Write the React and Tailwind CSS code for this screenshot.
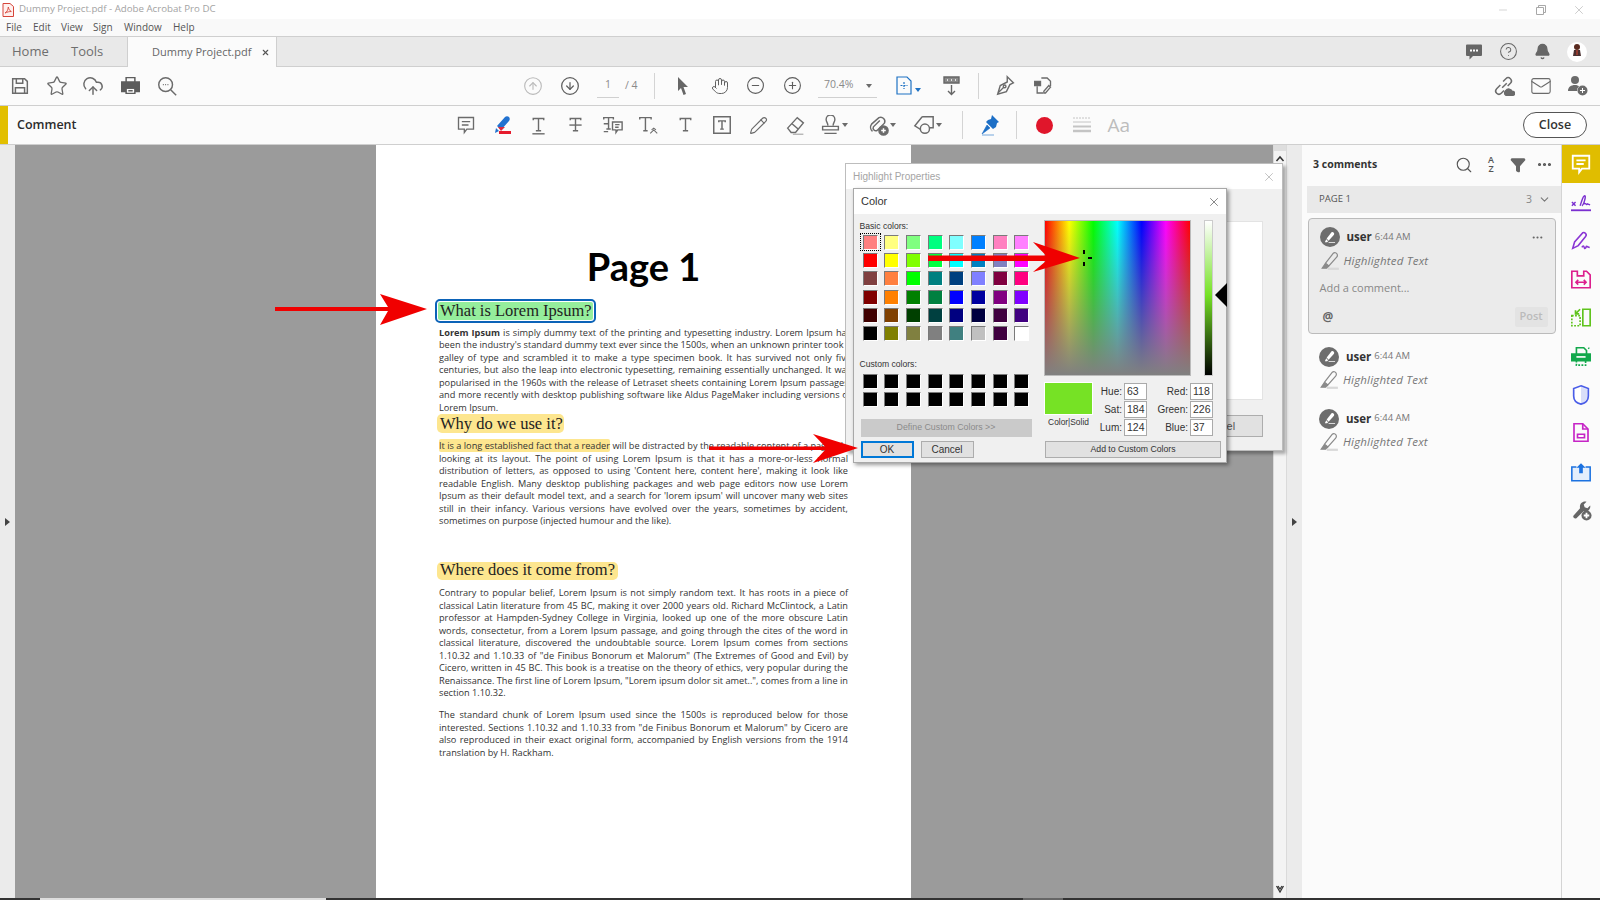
import { Star, CloudUpload, CircleArrowUp, CircleArrowDown, Hand, CircleMinus, CirclePlus, Pencil, Search, Filter, MoreHorizontal, ChevronDown, HelpCircle, Bell, Mail, X, Minus } from 'lucide-react';

const UI = 'font-["Open_Sans",sans-serif]';
const WIN = 'font-["Liberation_Sans",sans-serif]';

const BASIC = [
  '#ff8080', '#ffff80', '#80ff80', '#00ff80', '#80ffff', '#0080ff', '#ff80c0', '#ff80ff',
  '#ff0000', '#ffff00', '#80ff00', '#00ff40', '#00ffff', '#0080c0', '#8080c0', '#ff00ff',
  '#804040', '#ff8040', '#00ff00', '#008080', '#004080', '#8080ff', '#800040', '#ff0080',
  '#800000', '#ff8000', '#008000', '#008040', '#0000ff', '#0000a0', '#800080', '#8000ff',
  '#400000', '#804000', '#004000', '#004040', '#000080', '#000040', '#400040', '#400080',
  '#000000', '#808000', '#808040', '#808080', '#408080', '#c0c0c0', '#400040', '#ffffff',
];

const P1 = [
  'been the industry\'s standard dummy text ever since the 1500s, when an unknown printer took a',
  'galley of type and scrambled it to make a type specimen book. It has survived not only five',
  'centuries, but also the leap into electronic typesetting, remaining essentially unchanged. It was',
  'popularised in the 1960s with the release of Letraset sheets containing Lorem Ipsum passages,',
  'and more recently with desktop publishing software like Aldus PageMaker including versions of',
];
const P2 = [
  'looking at its layout. The point of using Lorem Ipsum is that it has a more-or-less normal',
  'distribution of letters, as opposed to using \'Content here, content here\', making it look like',
  'readable English. Many desktop publishing packages and web page editors now use Lorem',
  'Ipsum as their default model text, and a search for \'lorem ipsum\' will uncover many web sites',
  'still in their infancy. Various versions have evolved over the years, sometimes by accident,',
];
const P3 = [
  'Contrary to popular belief, Lorem Ipsum is not simply random text. It has roots in a piece of',
  'classical Latin literature from 45 BC, making it over 2000 years old. Richard McClintock, a Latin',
  'professor at Hampden-Sydney College in Virginia, looked up one of the more obscure Latin',
  'words, consectetur, from a Lorem Ipsum passage, and going through the cites of the word in',
  'classical literature, discovered the undoubtable source. Lorem Ipsum comes from sections',
  '1.10.32 and 1.10.33 of "de Finibus Bonorum et Malorum" (The Extremes of Good and Evil) by',
  'Cicero, written in 45 BC. This book is a treatise on the theory of ethics, very popular during the',
  'Renaissance. The first line of Lorem Ipsum, "Lorem ipsum dolor sit amet..", comes from a line in',
];
const P4 = [
  'The standard chunk of Lorem Ipsum used since the 1500s is reproduced below for those',
  'interested. Sections 1.10.32 and 1.10.33 from "de Finibus Bonorum et Malorum" by Cicero are',
  'also reproduced in their exact original form, accompanied by English versions from the 1914',
];

const Svg = ({ size = 22, children, className = 'text-[#6b6b6b]' }) => (
  <svg width={size} height={size} viewBox="0 0 24 24" fill="none" stroke="currentColor" strokeWidth="1.6" className={className}>
    {children}
  </svg>
);

const Slot = ({ w = 'w-[36.6px]', children }) => (
  <div className={`${w} h-full shrink-0 flex items-center justify-center`}>{children}</div>
);

const Caret = ({ color = 'border-t-[#6b6b6b]' }) => (
  <span className={`inline-block ml-[1px] w-0 h-0 border-x-[3px] border-x-transparent border-t-[4px] ${color}`} />
);

const Sep = ({ h = 'h-[26px]' }) => <div className={`w-px ${h} bg-[#d4d4d4] shrink-0`} />;

const Serif = ({ children }) => (
  <>
    <path d="M6 6V4h12v2M12 4v14M9 18h6" />
    {children}
  </>
);

const Line = ({ children, last, wide }) => (
  <div className={last ? 'whitespace-nowrap' : `[text-align:justify] [text-align-last:justify] ${wide ? 'w-[412px]' : ''}`}>{children}</div>
);

const Swatch = ({ color, selected }) => (
  <div className={`h-[18.33px] flex items-center justify-center ${selected ? 'outline outline-1 outline-dotted outline-black -outline-offset-1 h-[18px]' : ''}`}>
    <div
      className="w-[15px] h-[15px] border border-t-[#7a7a7a] border-l-[#7a7a7a] border-r-white border-b-white"
      style={{ backgroundColor: color }}
    />
  </div>
);

const Field = ({ label, value }) => (
  <div className="flex items-center h-[18.4px] justify-end">
    <span className="text-[10px] text-[#333] mr-[2px] whitespace-nowrap">{label}:</span>
    <div className="w-[23px] h-[17px] bg-white border border-[#aaa] text-[10.5px] text-[#333] pl-[2px] leading-[15px]">{value}</div>
  </div>
);

const MarkerIcon = ({ size = 20 }) => (
  <svg width={size} height={size} viewBox="0 0 18 18" fill="none" stroke="#8a8a8a" strokeWidth="1.1">
    <path d="M5 11l7-9c1-1 3-.5 3.5 1s.5 1.5-.5 2.5L8 13.5z" />
    <path d="M5 11l-3 4.500h4l2-2" fill="#8a8a8a" />
    <path d="M7 16h10" stroke="#d8d8d8" strokeWidth="2" />
  </svg>
);

const Avatar = () => (
  <div className="w-5 h-5 rounded-full bg-[#6d6d6d] flex items-center justify-center shrink-0">
    <svg width="13" height="13" viewBox="0 0 14 14" fill="white">
      <path d="M4 8l5-6.5c.8-.7 2-.4 2.600.3.6.8.6 1.600 0 2.400L6 10.500z" />
      <path d="M3.500 9L2 12h2.500l1-1zM6 12h7v1H6z" />
    </svg>
  </div>
);

const CommentHead = ({ menu }) => (
  <div className="flex items-center h-5">
    <Avatar />
    <span className="ml-[7px] text-[11.5px] font-bold text-[#333]">user</span>
    <span className="ml-[3px] text-[9.5px] text-[#777]">6:44 AM</span>
    {menu && <MoreHorizontal size={13} className="ml-auto mr-[4px] text-[#666]" />}
  </div>
);

const Highlighted = () => (
  <div className="flex items-center h-5 gap-[4px] mt-[3.5px]">
    <MarkerIcon />
    <span className="text-[11.5px] italic text-[#777] tracking-[0.2px]">Highlighted Text</span>
  </div>
);

const rail = 'h-[38.4px] flex items-center justify-center';

export default function App() {
  return (
    <div className={`relative w-[1600px] h-[900px] overflow-hidden bg-white flex flex-col ${UI}`}>
      {/* title bar */}
      <div className="h-[19px] shrink-0 bg-white flex items-center pl-[2px]">
        <svg width="12" height="14" viewBox="0 0 12 14" fill="none">
          <path d="M1 .5h7l3.500 3v10H1z" fill="#fff0ee" stroke="#d6453a" />
          <path d="M3 10c2-1 3-3 3.300-6 .5 2.500 1.500 3.700 3 4.500-2 0-4 .5-6.300 1.500z" stroke="#d6453a" strokeWidth=".9" />
        </svg>
        <span className="ml-[5px] text-[9.7px] text-[#a3a3a3]">Dummy Project.pdf - Adobe Acrobat Pro DC</span>
        <div className="ml-auto flex items-center text-[#a8a8a8]">
          <Minus size={12} strokeWidth={1} className="mr-[27px]" />
          <svg width="10" height="10" viewBox="0 0 10 10" fill="none" stroke="currentColor" className="mr-[26px]">
            <path d="M.5 2.500h7v7h-7zM2.500 2.500v-2h7v7h-2" />
          </svg>
          <X size={14} strokeWidth={1} className="mr-[14px]" />
        </div>
      </div>

      {/* menu */}
      <div className="h-[17px] shrink-0 bg-[#f9f9f9] flex items-center text-[10px] text-[#555] pl-[6px]">
        <span className="w-[27px]">File</span>
        <span className="w-[28px]">Edit</span>
        <span className="w-[32px]">View</span>
        <span className="w-[31px]">Sign</span>
        <span className="w-[49px]">Window</span>
        <span>Help</span>
      </div>

      {/* tabs */}
      <div className="h-[31px] shrink-0 bg-[#e9e9e9] border-y border-[#cfcfcf] flex items-stretch">
        <div className="w-[127px] flex items-center text-[13px] text-[#6e6e6e] pl-[12px]">
          <span className="w-[59px]">Home</span>
          <span>Tools</span>
        </div>
        <div className="w-[150px] bg-[#fbfbfb] border-x border-[#cfcfcf] -mb-px flex items-center pl-[24px] text-[11px] text-[#666] whitespace-nowrap">
          <span>Dummy Project.pdf</span>
          <X size={9} strokeWidth={3} className="ml-[10px] text-[#555]" />
        </div>
        <div className="ml-auto flex items-center h-full">
          <Slot w="w-[35px]">
            <svg width="18" height="18" viewBox="0 0 18 18" fill="#666">
              <path d="M2 1.500h14a1 1 0 0 1 1 1V12a1 1 0 0 1-1 1H8l-3.500 3.500V13H2a1 1 0 0 1-1-1V2.500a1 1 0 0 1 1-1z" />
              <path d="M5 6.500h2v2H5zM8 6.500h2v2H8zM11 6.500h2v2h-2z" fill="white" />
            </svg>
          </Slot>
          <Slot w="w-[35px]"><HelpCircle size={19} strokeWidth={1.3} className="text-[#666]" /></Slot>
          <Slot w="w-[33px]"><Bell size={17} fill="#666" className="text-[#666]" /></Slot>
          <div className="w-[20px] h-[20px] rounded-full bg-white ml-[8px] mr-[13px] flex items-center justify-center overflow-hidden">
            <svg width="14" height="17" viewBox="0 0 14 17">
              <circle cx="7" cy="4" r="3" fill="#5a2b20" />
              <path d="M4 7h6l1 6H3z" fill="#4a3030" />
              <path d="M6.500 7h1v5h-1z" fill="#d8442f" />
            </svg>
          </div>
        </div>
      </div>

      {/* toolbar */}
      <div className="h-[39px] shrink-0 bg-[#fbfbfb] border-b border-[#cfcfcf] flex items-center pb-px">
        <div className="flex items-center h-full pl-[2px]">
          <Slot>
            <Svg>
              <path d="M4 4h13l3 3v13H4zM8 4v5h7V4M7 20v-6h10v6" />
            </Svg>
          </Slot>
          <Slot><Star size={22} strokeWidth={1.4} className="text-[#6b6b6b]" /></Slot>
          <Slot><CloudUpload size={22} strokeWidth={1.6} className="text-[#6b6b6b]" /></Slot>
          <Slot>
            <svg width="21" height="21" viewBox="0 0 24 24" fill="none" stroke="#5d5d5d" strokeWidth="1.700">
              <path d="M7 8V3h10v5" />
              <path d="M2 8h20v11h-4v-4H6v4H2z" fill="#5d5d5d" />
              <path d="M7 15h10v6H7zM9.500 18h5" />
            </svg>
          </Slot>
          <Slot>
            <Svg>
              <circle cx="10.500" cy="10.500" r="7.500" />
              <path d="M16 16l6 6M7.500 10.500h1M10 10.500h1M12.500 10.500h1" />
            </Svg>
          </Slot>
        </div>
        <div className="flex items-center h-full ml-[330px]">
          <Slot w="w-[37px]"><CircleArrowUp size={20} strokeWidth={1.3} className="text-[#b9b9b9]" /></Slot>
          <Slot w="w-[36px]"><CircleArrowDown size={20} strokeWidth={1.5} className="text-[#5d5d5d]" /></Slot>
          <div className="ml-[9px] w-[22px] h-[24px] border-b border-[#d0d0d0] flex items-center justify-center text-[10.5px] text-[#8a8a8a]">1</div>
          <span className="ml-[6px] text-[10.5px] text-[#8a8a8a] w-[22px]">/ 4</span>
          <div className="ml-[7px]"><Sep /></div>
          <Slot w="w-[56px]">
            <svg width="14" height="20" viewBox="0 0 14 20" fill="#666"><path d="M2 1l10 10H7.500l2.500 7-2.500 1-2.500-7-3 3z" /></svg>
          </Slot>
          <Slot w="w-[18px]"><Hand size={22} strokeWidth={1.3} className="text-[#5d5d5d]" /></Slot>
          <Slot w="w-[54px]"><CircleMinus size={19} strokeWidth={1.4} className="text-[#5d5d5d]" /></Slot>
          <Slot w="w-[19px]"><CirclePlus size={19} strokeWidth={1.4} className="text-[#5d5d5d]" /></Slot>
          <div className="ml-[16px] w-[59px] h-[24px] border-b border-[#d0d0d0] flex items-center justify-between text-[10.5px] text-[#8a8a8a]">
            <span className="ml-[6px]">70.4%</span>
            <span className="mr-[5px]"><Caret /></span>
          </div>
          <div className="ml-[19px] w-[28px] flex items-center">
            <svg width="16" height="19" viewBox="0 0 16 19" fill="none" stroke="#1f72c4" strokeWidth="1.200">
              <path d="M1 1h10l4 4v13H1z" />
              <path d="M8 6v7M4.500 9.500h7" strokeDasharray="2 1" />
            </svg>
            <span className="ml-[2px]"><Caret color="border-t-[#1f72c4]" /></span>
          </div>
          <div className="ml-[5px]">
            <Slot w="w-[45px]">
              <svg width="17" height="20" viewBox="0 0 17 20" fill="none" stroke="#666" strokeWidth="1.400">
                <path d="M1 1h15v6H1z" fill="#888" />
                <path d="M4 4h1M8 4h1M12 4h1" stroke="white" />
                <path d="M8.500 9v9M5 15l3.500 3.500L12 15" />
              </svg>
            </Slot>
          </div>
          <div className="ml-[4px]"><Sep /></div>
          <Slot w="w-[54px]">
            <Svg size={21}><path d="M14 2l7 7-4 2-4 8-10 3 3-10 8-4zM3 21l7-7" /><circle cx="11" cy="13" r="1.500" /></Svg>
          </Slot>
          <Slot w="w-[20px]">
            <Svg size={21}><path d="M10 3h7l4 4v6M5 13v8h7" /><path d="M2 7h7v5H2z" fill="#666" /><path d="M21 14l-6 7h-2v-2l6-7z" /></Svg>
          </Slot>
        </div>
        <div className="ml-auto flex items-center h-full pr-[5px]">
          <Slot w="w-[37px]">
            <Svg size={22}><path d="M10 14l5-5M8 11l-4 4a3 3 0 0 0 5 5l3-3M16 12l3-3a3.500 3.500 0 0 0-5-5l-3 3" /><path d="M14 22a3 3 0 0 1 0-5 4 4 0 0 1 7 1 2 2 0 0 1 1 4z" fill="#6b6b6b" /></Svg>
          </Slot>
          <Slot w="w-[37px]"><Mail size={22} strokeWidth={1.2} className="text-[#6b6b6b]" /></Slot>
          <Slot w="w-[36px]">
            <svg width="21" height="21" viewBox="0 0 21 21" fill="#6b6b6b">
              <circle cx="8" cy="5" r="4" />
              <path d="M1 16c0-4 3-6 7-6 2 0 3 .5 4 1.500A5 5 0 0 0 10 16z" />
              <circle cx="15.500" cy="15.500" r="5" />
              <path d="M15 13h1v2h2v1h-2v2h-1v-2h-2v-1h2z" fill="white" />
            </svg>
          </Slot>
        </div>
      </div>

      {/* comment bar */}
      <div className="h-[39px] shrink-0 bg-[#fbfbfb] border-b border-[#cfcfcf] flex items-center">
        <div className="w-2 h-full bg-[#e2bf00] shrink-0" />
        <span className="ml-[9px] text-[12.5px] font-semibold text-[#2c2c2c]">Comment</span>
        <div className="flex items-center h-full ml-[371px]">
          <Slot>
            <Svg size={20}><path d="M3 3h18v14h-8l-3 4v-4H3z" /><path d="M7 8h10M7 12h8" /></Svg>
          </Slot>
          <Slot>
            <svg width="20" height="20" viewBox="0 0 20 20">
              <path d="M5 11l8-9c1-1 3-1 4 0s1 3 0 4l-8 9z" fill="#2272d0" />
              <path d="M6 12l7 0-4 4z" fill="#dc2a3c" />
              <path d="M4 13l3 3-4 2z" fill="#2272d0" />
              <path d="M7 16h12v3H7z" fill="#e61b2d" />
            </svg>
          </Slot>
          <Slot><Svg size={21}><Serif /><path d="M5 21.500h14" /></Svg></Slot>
          <Slot><Svg size={21}><Serif /><path d="M5 11.500h14" /></Svg></Slot>
          <Slot>
            <Svg size={21}><path d="M2 5V3h11v2M7.500 3v13M5 16h5M2 19h5M2 10h5" /><path d="M12 8h11v9h-5l-2 3v-3h-4z" fill="#fbfbfb" /><path d="M15 11h5M15 14h4" /></Svg>
          </Slot>
          <Slot><Svg size={21}><path d="M2 5V3h13v2M8.500 3v15M6 18h5" /><path d="M14 21l4-4 4 4M15.500 17l2.500-2 2.500 2" strokeWidth="1.200" /></Svg></Slot>
          <Slot><Svg size={21}><Serif /></Svg></Slot>
          <Slot><Svg size={22}><path d="M3 3h18v18H3z" /><path d="M8.500 9V7.500h7V9M12 7.500v9M10 16.500h4" /></Svg></Slot>
          <Slot><Pencil size={19} strokeWidth={1.4} className="text-[#6b6b6b]" /></Slot>
          <Slot><Svg size={21}><path d="M3 15L14 3l7 6-9 11H7z" /><path d="M8 10l7 6" /><path d="M9 22h12" stroke="#b5b5b5" /></Svg></Slot>
          <Slot w="w-[42px]">
            <Svg size={21}><path d="M9 12c0-3-2-4-2-7a5 5 0 0 1 10 0c0 3-2 4-2 7M3 13h18v4H3zM5 21h14" /></Svg>
            <Caret />
          </Slot>
          <Slot w="w-[52px]">
            <Svg size={22}><path d="M14 7l-7 7a3 3 0 0 0 4 4l8-8a4.500 4.500 0 0 0-6-6L5 11a6 6 0 0 0 1 8" /><circle cx="18" cy="18" r="5" fill="#6b6b6b" /><path d="M18 15.500v5M15.500 18h5" stroke="white" /></Svg>
            <Caret />
          </Slot>
          <Slot w="w-[40px]">
            <Svg size={22}><path d="M10 3L2 13l8 5M10 3l12 0v12h-6" /><circle cx="13" cy="16" r="5" fill="#fbfbfb" /></Svg>
            <Caret />
          </Slot>
          <div className="ml-[15px]"><Sep h="h-[28px]" /></div>
          <Slot w="w-[53px]">
            <svg width="20" height="22" viewBox="0 0 20 22" fill="#1d6fc6">
              <path d="M12 1l7 7-2 1-1 4-3 2-7-7 2-2 3-1z" />
              <path d="M7 11l3 3-8 6zM2 21h12" stroke="#1d6fc6" strokeWidth=".6" />
            </svg>
          </Slot>
          <Sep h="h-[28px]" />
          <Slot w="w-[54px]"><div className="w-[17px] h-[17px] rounded-full bg-[#e0162b]" /></Slot>
          <Slot w="w-[21px]">
            <svg width="18" height="16" viewBox="0 0 18 16" fill="none" stroke="#c4c4c4"><path d="M0 1h18" strokeDasharray="2 1" /><path d="M0 5h18" /><path d="M0 9.500h18" strokeWidth="2" /><path d="M0 14h18" strokeWidth="2.500" /></svg>
          </Slot>
          <span className="ml-[15px] text-[19px] text-[#bdbdbd]">Aa</span>
        </div>
        <button className="ml-auto mr-[13px] w-[64px] h-[26px] rounded-full border border-[#555] bg-white text-[12.5px] font-semibold text-[#333]">Close</button>
      </div>

      {/* body */}
      <div className="flex-1 min-h-0 flex">
        <div className="w-[15px] bg-[#ebebeb] flex items-center justify-center">
          <span className="w-0 h-0 border-y-[4px] border-y-transparent border-l-[5px] border-l-[#444]" />
        </div>
        <div className="w-[361px] bg-[#9b9b9b]" />

        {/* pdf page */}
        <div className="w-[535px] bg-white pl-[63px] pr-[63px] text-[9.2px] leading-[12.5px] text-[#333] overflow-hidden">
          <div className='mt-[101px] h-[40px] flex items-center justify-center font-["Lato",sans-serif] font-bold text-[38px] text-black'>Page 1</div>
          <div className='mt-[16px] w-[155px] -ml-[1px] h-[18px] bg-[#95ee9c] outline-2 outline-offset-1 outline-[#0c63b8] rounded-[2px] flex items-center pl-[2px] font-["Liberation_Serif",serif] text-[16.5px] text-[#222] whitespace-nowrap'>What is Lorem Ipsum?</div>
          <div className="mt-[6.75px]">
            <Line wide><b>Lorem Ipsum</b> is simply dummy text of the printing and typesetting industry. Lorem Ipsum has</Line>
            {P1.map((l) => <Line key={l} wide>{l}</Line>)}
            <Line last>Lorem Ipsum.</Line>
          </div>
          <div className='w-[127px] -ml-[2px] h-[19px] bg-[#fde68f] rounded-[5px] flex items-center pl-[3px] font-["Liberation_Serif",serif] text-[16.5px] text-[#222] whitespace-nowrap'>Why do we use it?</div>
          <div className="mt-[6.75px]">
            <Line last><span className="bg-[#fde68f] rounded-[2px]">It is a long established fact that a reader</span> will be distracted by the readable content of a page when</Line>
            {P2.map((l) => <Line key={l}>{l}</Line>)}
            <Line last>sometimes on purpose (injected humour and the like).</Line>
          </div>
          <div className='mt-[34px] w-[181px] -ml-[2px] h-[18px] bg-[#fde68f] rounded-[5px] flex items-center pl-[3px] font-["Liberation_Serif",serif] text-[16.5px] text-[#222] whitespace-nowrap'>Where does it come from?</div>
          <div className="mt-[7.75px]">
            {P3.map((l) => <Line key={l}>{l}</Line>)}
            <Line last>section 1.10.32.</Line>
          </div>
          <div className="mt-[9.5px]">
            {P4.map((l) => <Line key={l}>{l}</Line>)}
            <Line last>translation by H. Rackham.</Line>
          </div>
        </div>

        <div className="w-[362px] bg-[#9b9b9b]" />

        {/* scrollbar */}
        <div className="w-[14px] bg-[#f3f3f3] flex flex-col items-center justify-between border-x border-[#dadada] pb-[4px]">
          <div className="w-full">
            <div className="h-[6px] bg-[#dedede]" />
            <svg width="12" height="12" viewBox="0 0 12 12" fill="none" stroke="#333" strokeWidth="1.500" className="mt-[2px]"><path d="M2.500 8L6 4l3.500 4" /></svg>
          </div>
          <svg width="10" height="10" viewBox="0 0 10 10" fill="none" stroke="#333" strokeWidth="1.200"><path d="M1.500 2L5 8l3.500-6M3 2l2 3 2-3" /></svg>
        </div>
        <div className="w-[15px] bg-[#ebebeb] flex items-center justify-center">
          <span className="w-0 h-0 border-y-[4px] border-y-transparent border-l-[5px] border-l-[#444]" />
        </div>

        {/* comments panel */}
        <div className="w-[259px] bg-[#fbfbfb] flex flex-col">
          <div className="h-[41px] flex items-center pl-[11px] pb-[2px]">
            <span className="text-[10.5px] font-bold text-[#333]">3 comments</span>
            <div className="ml-auto flex items-center mr-[8px]">
              <Search size={18} strokeWidth={1.5} className="text-[#555] mr-[15px]" />
              <div className="flex flex-col items-center text-[9px] font-semibold leading-[8.5px] text-[#555] mr-[16px]"><span>A</span><span>Z</span></div>
              <Filter size={16} fill="#666" className="text-[#666] mr-[10px]" />
              <MoreHorizontal size={17} strokeWidth={2.5} className="text-[#555]" />
            </div>
          </div>
          <div className="h-[27px] ml-[5px] bg-[#e9e9e9] flex items-center pl-[12px] text-[9.5px] text-[#555]">
            <span>PAGE 1</span>
            <span className="ml-auto text-[10.5px] text-[#888]">3</span>
            <ChevronDown size={13} className="ml-[6px] mr-[10px] text-[#777]" />
          </div>
          <div className="mt-[5px] ml-[5.5px] mr-[5.5px] h-[116px] bg-[#ebebeb] border border-[#bbb] rounded-[4px] pl-[11px] pr-[7px] pt-[8px]">
            <CommentHead menu />
            <Highlighted />
            <div className="mt-[9.5px] text-[11px] text-[#888]">Add a comment...</div>
            <div className="mt-[10px] flex items-center justify-between">
              <span className="text-[12px] font-bold text-[#666] ml-[3px]">@</span>
              <div className="w-[33px] h-[20px] rounded-[2px] bg-[#e3e3e3] flex items-center justify-center text-[11px] font-semibold text-[#bbb]">Post</div>
            </div>
          </div>
          <div className="ml-[17px] mt-[12.5px]">
            <CommentHead />
            <Highlighted />
          </div>
          <div className="ml-[17px] mt-[18.5px]">
            <CommentHead />
            <Highlighted />
          </div>
        </div>

        {/* tool rail */}
        <div className="w-[39px] bg-[#fbfbfb] border-l border-[#d4d4d4]">
          <div className={`${rail} bg-[#e0bd00]`}>
            <svg width="22" height="22" viewBox="0 0 24 24" fill="none" stroke="white" strokeWidth="2"><path d="M3 3h18v14h-8l-3 4v-4H3z" /><path d="M7 8h10M7 12h8" /></svg>
          </div>
          <div className={rail}>
            <svg width="22" height="20" viewBox="0 0 24 22" fill="none" stroke="#7b2fd0" strokeWidth="1.600"><path d="M2 10l4 4M6 10l-4 4M11 14c2-5 3-11 5-11s-1 10-3 11M15 12c2-2 3 2 4 0l3 1" /><path d="M1 19h22" strokeWidth="2" /></svg>
          </div>
          <div className={rail}>
            <svg width="22" height="22" viewBox="0 0 24 24" fill="none" stroke="#8a35d4" strokeWidth="1.700"><path d="M3 20l2-7 9-10c2-1 5 2 3 4L9 17z" /><path d="M13 19c1-2 2-2 2.500 0s1.500 1 2-.5 1.500 0 4 .5" /></svg>
          </div>
          <div className={rail}>
            <svg width="22" height="21" viewBox="0 0 24 22" fill="none" stroke="#dc1f8e" strokeWidth="1.800"><path d="M2 2h6v5h7V2h3l4 4v14H2z" /><path d="M7 14h10M9 11.500L6.500 14 9 16.500M15 11.500l2.500 2.500-2.500 2.500" /></svg>
          </div>
          <div className={rail}>
            <svg width="22" height="21" viewBox="0 0 24 22" fill="none" stroke="#5fc31c" strokeWidth="1.800"><path d="M14 2h8v18h-8z" /><path d="M2 9h9v11H2z" strokeDasharray="2 1.500" /><path d="M11 2L6 7M6 3v4h4" /></svg>
          </div>
          <div className={rail}>
            <svg width="22" height="22" viewBox="0 0 24 24" fill="none" stroke="#12a84b" strokeWidth="1.800"><path d="M7 10V3h8l3 3v4M20 3l1 1" /><path d="M2 10h20v7H2z" fill="#12a84b" /><path d="M7 17v5h10v-5" strokeDasharray="2 1.500" /><path d="M7 13h10" stroke="white" /></svg>
          </div>
          <div className={rail}>
            <svg width="20" height="22" viewBox="0 0 20 24" fill="none" stroke="#4a5de8" strokeWidth="1.800"><path d="M10 3v18c-3-1-7-3-7-8V6z" fill="#fff" stroke="none" /><path d="M10 3v18c3-1 7-3 7-8V6z" fill="#d9def9" stroke="none" /><path d="M10 2l8 3v8c0 5-4 8-8 9-4-1-8-4-8-9V5z" /></svg>
          </div>
          <div className={rail}>
            <svg width="18" height="21" viewBox="0 0 20 24" fill="none" stroke="#c625c6" strokeWidth="1.900"><path d="M2 2h10l6 6v14H2z" /><path d="M12 2v6h6M6 14h8v4H6z" /></svg>
          </div>
          <div className={rail}>
            <svg width="22" height="21" viewBox="0 0 24 22" fill="none" stroke="#1c72e0" strokeWidth="1.700"><path d="M7 6H2v15h20V6h-5" fill="#e3eefc" /><path d="M12 2l5 5h-3v6h-4V7H7z" fill="#1c72e0" stroke="none" /></svg>
          </div>
          <div className={rail}>
            <svg width="22" height="22" viewBox="0 0 24 24" fill="#666"><path d="M3 19L11 10c-1-4 2-8 7-7l-3 3 1 3 3 1 3-3c1 4-3 8-7 6l-8 8c-2 1-4-1-3-2z" /><circle cx="18" cy="18" r="5.500" /><path d="M17 15h2v2h2v2h-2v2h-2v-2h-2v-2h2z" fill="white" /></svg>
          </div>
        </div>
      </div>

      <div className="h-[2px] shrink-0 flex bg-[#333]">
        <div className="ml-[40px] w-[286px] bg-[#ddd]" />
        <div className="ml-[697px] w-[40px] bg-[#666]" />
      </div>

      {/* Highlight Properties window */}
      <div className={`absolute left-[845px] top-[163px] w-[438px] h-[288px] bg-[#f0f0f0] border border-[#bdbdbd] shadow-[3px_3px_3px_rgba(0,0,0,0.3)] flex flex-col ${WIN}`}>
        <div className="h-[25px] bg-white flex items-center justify-between pl-[7px] pr-[6px] text-[10px] text-[#a5a5a5]">
          <span>Highlight Properties</span>
          <X size={14} strokeWidth={1} className="text-[#999]" />
        </div>
        <div className="flex flex-col items-end pr-[19px] pt-[32px]">
          <div className="w-[250px] h-[179px] bg-white border border-[#e3e3e3]" />
          <div className="mt-[15px] w-[90px] h-[22px] bg-[#e1e1e1] border border-[#adadad] flex items-center justify-center text-[11px] text-[#555]">Cancel</div>
        </div>
      </div>

      {/* Color dialog */}
      <div className={`absolute left-[853px] top-[188px] w-[374px] h-[275px] bg-[#f0f0f0] border border-[#a8a8a8] shadow-[2px_2px_4px_rgba(0,0,0,0.4)] flex flex-col ${WIN}`}>
        <div className="h-[25px] shrink-0 bg-white flex items-center justify-between pl-[7px] pr-[5px] text-[11px] text-[#333]">
          <span>Color</span>
          <X size={14} strokeWidth={1} className="text-[#333]" />
        </div>
        <div className="flex flex-1">
          <div className="w-[190px] shrink-0 pl-[5.5px] text-[8.6px] text-[#333]">
            <div className="mt-[6px] h-[12px] leading-[12px]">Basic colors:</div>
            <div className="mt-[1px] w-[173px] grid grid-cols-8">
              {BASIC.map((c, i) => <Swatch key={i} color={c} selected={i === 0} />)}
            </div>
            <div className="mt-[15px] h-[12px] leading-[12px]">Custom colors:</div>
            <div className="mt-[2px] w-[173px] grid grid-cols-8">
              {Array.from({ length: 16 }, (_, i) => <Swatch key={i} color="#000000" />)}
            </div>
            <div className="mt-[10px] ml-[1px] w-[171px] h-[18px] bg-[#cacaca] flex items-center justify-center text-[8.8px] text-[#8a8a8a]">Define Custom Colors &gt;&gt;</div>
            <div className="mt-[4px] ml-[1px] flex gap-[7px]">
              <div className="w-[53px] h-[17px] bg-[#e1e1e1] border-2 border-[#0078d7] flex items-center justify-center text-[10px]">OK</div>
              <div className="w-[53px] h-[17px] bg-[#e1e1e1] border border-[#adadad] flex items-center justify-center text-[10px]">Cancel</div>
            </div>
          </div>
          <div className="flex-1 pt-[6px] relative">
            <div className="flex items-start">
              <div className="w-[147px] h-[156px] border border-[#bbb] bg-[linear-gradient(to_bottom,transparent,#808080),linear-gradient(to_right,#f00,#ff0,#0f0,#0ff,#00f,#f0f,#f00)]" />
              <div className="ml-[13px] w-[9px] h-[156px] bg-[linear-gradient(to_bottom,#ffffff,#76e225_48%,#000000)] border border-[#ccc]" />
              <div className="absolute left-[171px] top-[69px] w-0 h-0 border-y-[12px] border-y-transparent border-r-[12px] border-r-black" />
            </div>
            <div className="mt-[6px] flex items-start text-[10px] text-[#333]">
              <div className="w-[49px] shrink-0">
                <div className="h-[33px] bg-[#76e225] border border-white" />
                <div className="mt-[1px] text-center text-[8.4px] whitespace-nowrap">Color|Solid</div>
              </div>
              <div className="w-[54px] shrink-0">
                <Field label="Hue" value="63" />
                <Field label="Sat" value="184" />
                <Field label="Lum" value="124" />
              </div>
              <div className="w-[66px] shrink-0">
                <Field label="Red" value="118" />
                <Field label="Green" value="226" />
                <Field label="Blue" value="37" />
              </div>
            </div>
            <div className="mt-[4px] ml-[1px] w-[176px] h-[17px] bg-[#e1e1e1] border border-[#adadad] flex items-center justify-center text-[8.7px] text-[#333]">Add to Custom Colors</div>
          </div>
        </div>
      </div>

      {/* annotation arrows and the picker cross */}
      <svg className="absolute left-0 top-0 pointer-events-none" width="1600" height="900">
        <path d="M275 307H388L380 294L427 309L380 325L388 311H275z" fill="#f00000" />
        <path d="M928 255.500H1046L1033 242L1080 258L1033 272L1046 261H928z" fill="#f00000" />
        <path d="M709 446.500H825L813 434L858 448L813 463L825 450H709z" fill="#f00000" />
        <path d="M1083 250h2v4h-2zM1083 262h2v4h-2zM1088 257h4v2h-4z" fill="#000" />
      </svg>
    </div>
  );
}
